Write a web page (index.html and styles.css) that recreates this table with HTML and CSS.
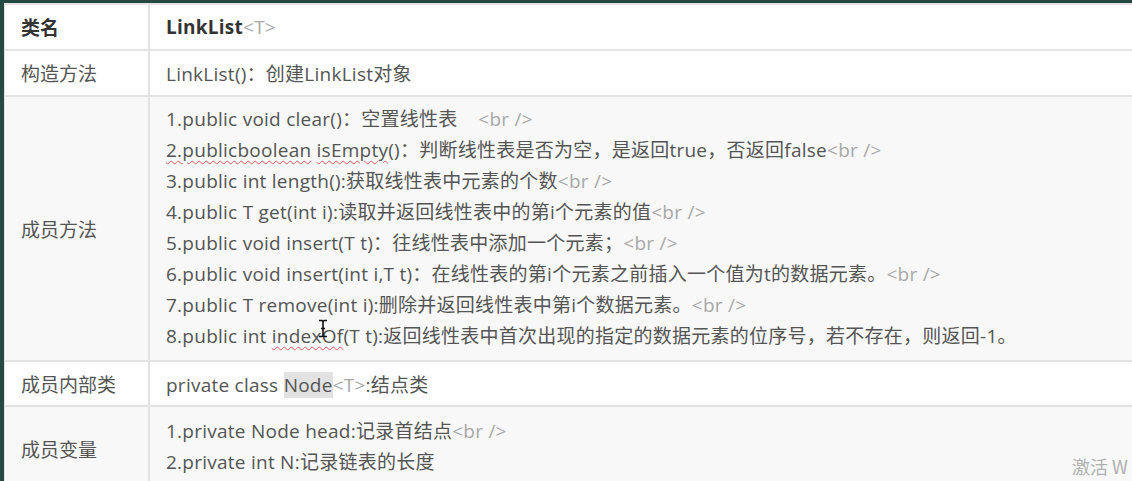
FILE: index.html
```html
<!DOCTYPE html>
<html lang="zh">
<head>
<meta charset="utf-8">
<link rel="stylesheet" href="styles.css">
</head>
<body>
<div class="frame">
  <table class="api">
    <tr class="head">
      <th class="label">类名</th>
      <th class="desc">LinkList<span class="tag">&lt;T&gt;</span></th>
    </tr>
    <tr class="ctor">
      <td class="label">构造方法</td>
      <td class="desc">LinkList()：创建LinkList对象</td>
    </tr>
    <tr class="alt">
      <td class="label">成员方法</td>
      <td class="desc lines">
        <div>1.public void clear()：空置线性表 &nbsp; &nbsp;<span class="tag">&lt;br /&gt;</span></div>
        <div><span class="spell">2.publicboolean</span> <span class="spell">isEmpty</span>()：判断线性表是否为空，是返回true，否返回false<span class="tag">&lt;br /&gt;</span></div>
        <div>3.public int length():获取线性表中元素的个数<span class="tag">&lt;br /&gt;</span></div>
        <div>4.public T get(int i):读取并返回线性表中的第i个元素的值<span class="tag">&lt;br /&gt;</span></div>
        <div>5.public void insert(T t)：往线性表中添加一个元素；<span class="tag">&lt;br /&gt;</span></div>
        <div>6.public void insert(int i,T t)：在线性表的第i个元素之前插入一个值为t的数据元素。<span class="tag">&lt;br /&gt;</span></div>
        <div>7.public T remove(int i):删除并返回线性表中第i个数据元素。<span class="tag">&lt;br /&gt;</span></div>
        <div class="cursor-line">8.public int <span class="spell">indexOf</span>(T t):返回线性表中首次出现的指定的数据元素的位序号，若不存在，则返回-1。<svg class="ibeam" width="10" height="19" viewBox="0 0 10 19"><path d="M1 1.5h3l1 1 1-1h3M5 2.5v14M1 17.5h3l1-1 1 1h3M3 9.5h4" fill="none" stroke="#111" stroke-width="1.6"/></svg></div>
      </td>
    </tr>
    <tr>
      <td class="label">成员内部类</td>
      <td class="desc">private class <span class="hl">Node</span><span class="tag">&lt;T&gt;</span>:结点类</td>
    </tr>
    <tr class="alt">
      <td class="label">成员变量</td>
      <td class="desc lines last">
        <div>1.private Node head:记录首结点<span class="tag">&lt;br /&gt;</span></div>
        <div>2.private int N:记录链表的长度</div>
      </td>
    </tr>
  </table>
  <div class="watermark">激活 W</div>
</div>
</body>
</html>
```
FILE: styles.css
```css
html, body {
  margin: 0;
  padding: 0;
  background: #264a42;
  overflow: hidden;
}
.frame {
  position: relative;
  margin: 3px 0 0 4px;
  height: 478px;
  background: #fff;
  overflow: hidden;
}
.api {
  border-collapse: collapse;
  width: 100%;
  font-family: "Open Sans", "Noto Sans CJK SC", sans-serif;
  font-size: 19px;
  color: #555;
}
.api th, .api td {
  border: 2px solid #e3e3e3;
  text-align: left;
  vertical-align: middle;
  padding: 0 16px;
}
.api .label {
  width: 111px;
  border-left: 1px solid #e3e3e3;
}
.api .desc {
  letter-spacing: 0.25px;
}
.head th {
  height: 44px;
  font-weight: 700;
  color: #333;
}
.head .tag { font-weight: 400; }
.api tr { height: 45px; }
.api tr.ctor { height: 46px; }
.api td.desc, .api th.desc { border-right: none; }
.alt { background: #f8f8f8; }
.lines {
  line-height: 31px;
  padding-top: 7px !important;
  padding-bottom: 8px !important;
}
.lines.last {
  padding-top: 9px !important;
  padding-bottom: 12px !important;
}
.tag {
  color: #a8a8a8;
}
.spell {
  text-decoration: underline wavy #e06060;
  text-decoration-thickness: 1px;
  text-underline-offset: 3px;
}
.hl {
  background: #e2e2e2;
}
.cursor-line {
  position: relative;
}
.ibeam {
  position: absolute;
  left: 152px;
  top: -2px;
}
.watermark {
  position: absolute;
  right: -4px;
  bottom: 2px;
  width: 64px;
  font-family: "Noto Sans CJK SC", "Open Sans", sans-serif;
  font-size: 18px;
  color: #b0b0b0;
}
```
